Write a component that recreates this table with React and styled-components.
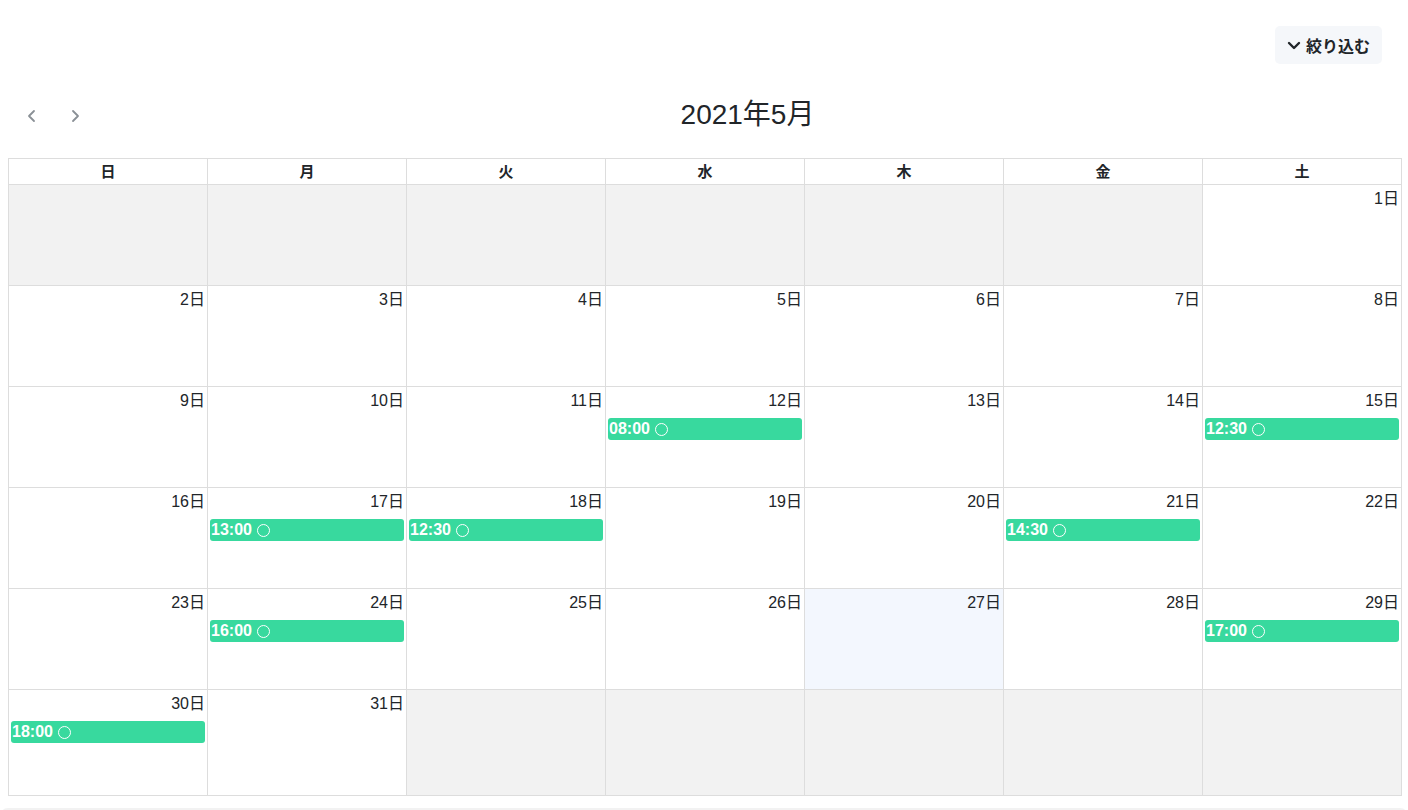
import styled, { createGlobalStyle } from 'styled-components';

const GlobalStyle = createGlobalStyle`
    body {
        margin: 0;
        background: #ffffff;
        font-family: "Liberation Sans", "Noto Sans CJK JP", sans-serif;
        color: #212529;
    }
`;

const Pagina = styled.div`
    display: flex;
    flex-direction: column;
    padding: 8px 6px 0 8px;
`;

const BarraFiltro = styled.div`
    display: flex;
    justify-content: flex-end;
    padding: 18px 20px 0 0;
    height: 38px;
`;

const BotaoFiltro = styled.button`
    display: flex;
    align-items: center;
    gap: 4px;
    height: 38px;
    padding: 0 12px 0 11px;
    border: none;
    border-radius: 5px;
    background: #f5f7fa;
    font-family: "Liberation Sans", "Noto Sans CJK JP", sans-serif;
    font-size: 16px;
    font-weight: 700;
    color: #212529;
`;

const Cabecalho = styled.div`
    display: flex;
    align-items: center;
    height: 52px;
    margin-top: 24px;
    margin-bottom: 18px;
`;

const Navegacao = styled.div`
    display: flex;
    gap: 24px;
    padding: 4px 0 0 14px;
    width: 71px;
`;

const Seta = styled.span`
    display: flex;
    width: 19px;
    justify-content: center;
    color: #8a9096;
`;

const Titulo = styled.h2`
    flex: 1;
    margin: 0;
    padding-bottom: 4px;
    text-align: center;
    font-size: 28px;
    font-weight: 400;
    color: #212529;
`;

const Tabela = styled.div`
    border-left: 1px solid #dddddd;
    border-top: 1px solid #dddddd;
`;

const Linha = styled.div`
    display: grid;
    grid-template-columns: repeat(7, 1fr);
    height: ${p => p.$altura}px;
`;

const CelulaTitulo = styled.div`
    border-right: 1px solid #dddddd;
    border-bottom: 1px solid #dddddd;
    display: flex;
    align-items: center;
    justify-content: center;
    padding-bottom: 2px;
    font-size: 15px;
    font-weight: 700;
    color: #212529;
`;

const Celula = styled.div`
    border-right: 1px solid #dddddd;
    border-bottom: 1px solid #dddddd;
    background: ${p => (p.$fora ? '#f2f2f2' : p.$hoje ? '#f3f7fe' : '#ffffff')};
    display: flex;
    flex-direction: column;
    min-width: 0;
`;

const NumeroDia = styled.div`
    text-align: right;
    padding: 4px 2px 0 0;
    font-size: 16px;
    line-height: 19px;
    color: #212529;
`;

const Evento = styled.div`
    margin: 8px 2px 0 2px;
    height: 22px;
    border-radius: 3px;
    background: #38d99e;
    color: #ffffff;
    font-size: 16px;
    font-weight: 700;
    line-height: 22px;
    padding-left: 1px;
    display: flex;
    align-items: center;
    gap: 5px;
`;

const Circulo = styled.span`
    width: 13px;
    height: 13px;
    border: 1.5px solid #ffffff;
    border-radius: 50%;
    box-sizing: border-box;
`;

const Rodape = styled.div`
    margin: 12px -6px 0 -8px;
    height: 20px;
    border-radius: 8px 8px 0 0;
    background: #f2f2f2;
`;

const diasSemana = ['日', '月', '火', '水', '木', '金', '土'];

const eventos = {
    12: '08:00',
    15: '12:30',
    17: '13:00',
    18: '12:30',
    21: '14:30',
    24: '16:00',
    29: '17:00',
    30: '18:00',
};

function montarSemanas() {
    const celulas = [];
    for (let i = 0; i < 6; i++) celulas.push(null);
    for (let d = 1; d <= 31; d++) celulas.push(d);
    while (celulas.length < 42) celulas.push(null);
    const semanas = [];
    for (let i = 0; i < 42; i += 7) semanas.push(celulas.slice(i, i + 7));
    return semanas;
}

function Chevron({ dir }) {
    const d = dir === 'left' ? 'M10 3 L5 8 L10 13' : dir === 'right' ? 'M6 3 L11 8 L6 13' : 'M3 6 L8 11 L13 6';
    return (
        <svg width="16" height="16" viewBox="0 0 16 16" fill="none">
            <path d={d} stroke="currentColor" strokeWidth={dir === 'down' ? 2.4 : 1.8} strokeLinecap="round" strokeLinejoin="round" />
        </svg>
    );
}

export default function App() {
    const semanas = montarSemanas();
    return (
        <Pagina>
            <GlobalStyle />
            <BarraFiltro>
                <BotaoFiltro>
                    <Chevron dir="down" />
                    絞り込む
                </BotaoFiltro>
            </BarraFiltro>

            <Cabecalho>
                <Navegacao>
                    <Seta><Chevron dir="left" /></Seta>
                    <Seta><Chevron dir="right" /></Seta>
                </Navegacao>
                <Titulo>2021年5月</Titulo>
            </Cabecalho>

            <Tabela>
                <Linha $altura={26}>
                    {diasSemana.map(d => <CelulaTitulo key={d}>{d}</CelulaTitulo>)}
                </Linha>
                {semanas.map((semana, i) => (
                    <Linha key={i} $altura={i === 5 ? 106 : 101}>
                        {semana.map((dia, j) => (
                            <Celula key={j} $fora={dia === null} $hoje={dia === 27}>
                                {dia !== null && <NumeroDia>{dia}日</NumeroDia>}
                                {eventos[dia] && (
                                    <Evento>
                                        {eventos[dia]}
                                        <Circulo />
                                    </Evento>
                                )}
                            </Celula>
                        ))}
                    </Linha>
                ))}
            </Tabela>
            <Rodape />
        </Pagina>
    );
}
